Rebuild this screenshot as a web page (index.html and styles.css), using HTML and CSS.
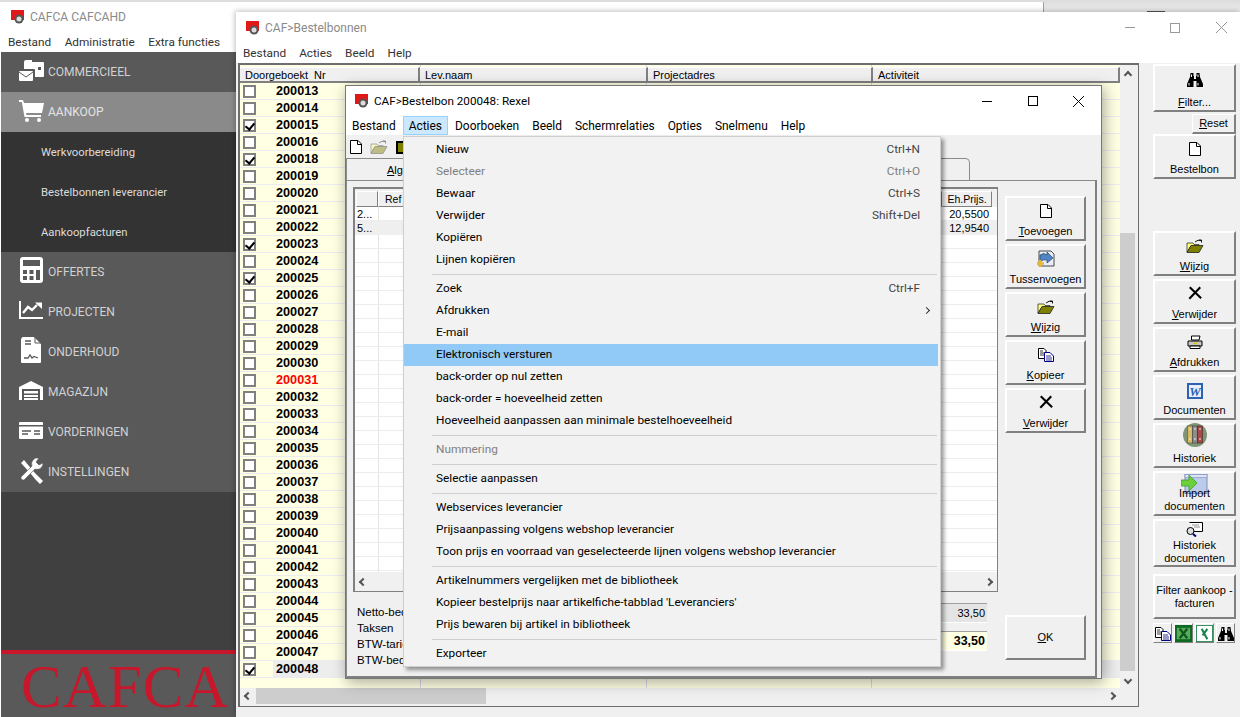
FILE: index.html
```html
<!DOCTYPE html>
<html lang="nl">
<head>
    <meta charset="UTF-8">
    <title>CAFCA CAFCAHD</title>
    <link rel="stylesheet" href="styles.css">
</head>
<body>
<svg class="defs" width="0" height="0">
    <symbol id="i-app" viewBox="0 0 14 14">
        <rect x="0" y="0" width="13" height="10" fill="#e01818"/>
        <circle cx="8" cy="9" r="4.5" fill="#555"/>
        <circle cx="8" cy="9" r="2.5" fill="#ddd"/>
    </symbol>
    <symbol id="i-doc" viewBox="0 0 12 14">
        <path d="M.5.5H8L11.5 4V13.5H.5Z" fill="#fff" stroke="#000"/>
        <path d="M7.5.5V4.5H11.5" fill="none" stroke="#000"/>
    </symbol>
    <symbol id="i-open" viewBox="0 0 18 14">
        <path d="M1 13V4H7L8 5.5H13V7H5L1 13Z" fill="#ffff80" stroke="#333" stroke-width=".8"/>
        <path d="M1 13.5L5 6.5H17L13 13.5Z" fill="#808000" stroke="#222" stroke-width=".8"/>
        <path d="M9 3Q12 .2 15 1.5M15.5 3.5V1H13" fill="none" stroke="#000" stroke-width=".9"/>
    </symbol>
    <symbol id="i-x" viewBox="0 0 16 16">
        <path d="M2 1.5L15 14M14 1.5L1.500 14.500" fill="none" stroke="#000" stroke-width="2.400"/>
    </symbol>
    <symbol id="i-copy" viewBox="0 0 16 14">
        <path d="M.5.5H6L8 2.500V10.500H.5Z" fill="#fff" stroke="#000"/>
        <path d="M2 3H5M2 5H6M2 7H6" stroke="#000" stroke-width=".8"/>
        <path d="M6.500 4.500H12L15.500 8V13.500H6.500Z" fill="#fff" stroke="#000080"/>
        <path d="M8 8H13M8 10H14M8 12H14" stroke="#000080" stroke-width=".8"/>
    </symbol>
    <symbol id="i-print" viewBox="0 0 16 14">
        <path d="M4.500 5V1H13L12 5Z" fill="#fff" stroke="#000"/>
        <path d="M1 6H15V11H1Z" fill="#c8c8c8" stroke="#000"/>
        <path d="M3 11H13V13.500H3Z" fill="#fff" stroke="#000"/>
        <path d="M6 8.500H10" stroke="#e0c000" stroke-width="1.500"/>
    </symbol>
    <symbol id="i-word" viewBox="0 0 16 16">
        <rect width="16" height="16" fill="#2c62b4"/>
        <rect x="2" y="2" width="12" height="12" fill="#e8eefa"/>
        <text x="8" y="13" class="word-letter">W</text>
    </symbol>
    <symbol id="i-binders" viewBox="0 0 24 24">
        <circle cx="12" cy="12" r="12" fill="#7f9676"/>
        <rect x="4.500" y="3" width="5" height="17" fill="#d8b860" stroke="#554" stroke-width=".6"/>
        <rect x="9.500" y="3" width="5" height="17" fill="#8c8c8c" stroke="#444" stroke-width=".6"/>
        <rect x="14.500" y="3" width="5" height="17" fill="#a84848" stroke="#422" stroke-width=".6"/>
        <path d="M6 6H8M11 6H13M16 6H18M6 16H8M11 16H13M16 16H18" stroke="#eee" stroke-width="1.200"/>
    </symbol>
    <symbol id="i-import" viewBox="0 0 27 20">
        <rect x="4" y=".5" width="22" height="19" fill="#bccbea" stroke="#7f90c0"/>
        <rect x="4" y=".5" width="22" height="3" fill="#dde4f5" stroke="#7f90c0" stroke-width=".6"/>
        <path d="M0 6H8V1L16 9L8 17V12H0Z" fill="#6ccf3c" stroke="#3f9c22" stroke-width=".8"/>
    </symbol>
    <symbol id="i-hist" viewBox="0 0 17 15">
        <path d="M3.500.5H16.500V9.500H7.500" fill="#fff" stroke="#000"/>
        <path d="M6 3H13M8 5H14" stroke="#777" stroke-width=".8"/>
        <circle cx="4.500" cy="9" r="3.500" fill="#ddd" stroke="#000"/>
        <path d="M7 12L10 14.500" stroke="#000080" stroke-width="2"/>
    </symbol>
    <symbol id="i-xl1" viewBox="0 0 18 18">
        <rect width="18" height="18" fill="#0b6b20"/>
        <rect x="2" y="3" width="14" height="12" fill="#5ea85e"/>
        <path d="M5 4L13 14M13 4L5 14" stroke="#0b5a1c" stroke-width="2.400"/>
    </symbol>
    <symbol id="i-xl2" viewBox="0 0 18 18">
        <rect x=".5" y=".5" width="17" height="17" fill="#fff" stroke="#2e8a56"/>
        <path d="M6 4L12 15M12 4L7 11" stroke="#17864a" stroke-width="2.200" fill="none"/>
    </symbol>
    <symbol id="i-bino" viewBox="0 0 16 14">
        <path d="M3.500 0H6.500V3H7V6H9V3H9.500V0H12.500L13 4L16 11V14H9.500V8H6.500V14H0V11L3 4Z" fill="#000"/>
        <path d="M4.500 1.500V4M11 1.500V4M2 10V12.500M11 10V12.500" stroke="#fff"/>
    </symbol>
    <symbol id="i-insert" viewBox="0 0 18 18">
        <path d="M2 1H14L17 4V16H2Z" fill="#e8eef8" stroke="#222" stroke-width=".8"/>
        <path d="M3 5Q7 2 10 5V2L16 8L10 13V10Q6 9 3 12Z" fill="#4f86c8" stroke="#234" stroke-width=".6"/>
        <path d="M3 10V17M0 13.500H7" stroke="#e8b830" stroke-width="2.600"/>
    </symbol>
    <symbol id="s-comm" viewBox="0 0 25 21">
        <path d="M7 0H13V2H24Q25 2 25 3V16Q25 17 24 17H16V10Q16 9 15 9H5V2Q5 0 7 0Z" fill="#fff"/>
        <rect x="19" y="7" width="3" height="3" fill="#595959"/>
        <rect x="0" y="11" width="14" height="10" rx="1" fill="#fff"/>
        <path d="M0 12L7 17L14 12" fill="none" stroke="#595959"/>
    </symbol>
    <symbol id="s-cart" viewBox="0 0 25 22">
        <path d="M0 0H4L5 3H25L23 13H7L7.500 15H22V17H5.500L2.800 2H0Z" fill="#fff"/>
        <circle cx="8" cy="20" r="2" fill="#fff"/>
        <circle cx="20" cy="20" r="2" fill="#fff"/>
    </symbol>
    <symbol id="s-calc" viewBox="0 0 23 26">
        <rect width="23" height="26" rx="3" fill="#fff"/>
        <rect x="3" y="3" width="17" height="6" fill="#595959"/>
        <path d="M3 13H7V17H3ZM9.500 13H13.500V17H9.500ZM16 13H20V23H16ZM3 19H7V23H3ZM9.500 19H13.500V23H9.500Z" fill="#595959"/>
    </symbol>
    <symbol id="s-chart" viewBox="0 0 24 18">
        <path d="M0 0H2V16H24V18H0Z" fill="#fff"/>
        <path d="M4 12L9 6L13 9L18 4" fill="none" stroke="#fff" stroke-width="2.400"/>
        <path d="M16 1.500H23V8Z" fill="#fff"/>
    </symbol>
    <symbol id="s-file" viewBox="0 0 20 26">
        <path d="M2 0H13L20 7V25Q20 26 19 26H1Q0 26 0 25V2Q1 0 2 0Z" fill="#fff"/>
        <path d="M14 0V6H20" fill="none" stroke="#595959"/>
        <path d="M4 4H10M4 7H10" stroke="#595959" stroke-width="1.500"/>
        <path d="M3 21H7L9 18L11 21L13 19.500L17 21" fill="none" stroke="#595959" stroke-width="1.300"/>
    </symbol>
    <symbol id="s-garage" viewBox="0 0 24 19">
        <path d="M0 6L12 0L24 6V19H21V8H3V19H0Z" fill="#fff"/>
        <path d="M5 10H19V12.500H5ZM5 14H19V16H5ZM5 17H19V19H5Z" fill="#fff"/>
    </symbol>
    <symbol id="s-card" viewBox="0 0 24 17">
        <rect width="24" height="17" rx="1" fill="#fff"/>
        <rect y="3" width="24" height="1.500" fill="#595959"/>
        <path d="M3 9H12M15 9H21M3 12H9M15 12H21" stroke="#595959" stroke-width="1.500"/>
    </symbol>
    <symbol id="s-tools" viewBox="0 0 24 26">
        <path d="M1 5L4 2L14 14L19 19L23 23L20 26L15 21L11 16Z" fill="#fff"/>
        <path d="M23 5A6 6 0 0 1 15 11L4 22A2.500 2.500 0 0 1 1 19L12 8A6 6 0 0 1 19 0L16 4L19 7Z" fill="#fff" stroke="#595959" stroke-width=".6"/>
    </symbol>
</svg>

<div class="desktop">

    <div class="peek"></div>

    <!-- hoofdvenster -->
    <div class="window main-window">
        <div class="title-bar">
            <svg class="app-icon"><use href="#i-app"/></svg>
            <span class="title-text">CAFCA CAFCAHD</span>
            <div class="win-buttons">
                <span class="win-max"></span><svg class="win-close" viewBox="0 0 11 11"><path d="M0 0L11 11M11 0L0 11"/></svg>
            </div>
        </div>
        <div class="menu-bar main-menu">
            <span>Bestand</span><span>Administratie</span><span>Extra functies</span>
        </div>
        <div class="sidebar">
            <div class="side-item"><svg class="side-icon comm"><use href="#s-comm"/></svg>COMMERCIEEL</div>
            <div class="side-item active"><svg class="side-icon cart"><use href="#s-cart"/></svg>AANKOOP</div>
            <div class="side-sub">Werkvoorbereiding</div>
            <div class="side-sub">Bestelbonnen leverancier</div>
            <div class="side-sub">Aankoopfacturen</div>
            <div class="side-item"><svg class="side-icon calc"><use href="#s-calc"/></svg>OFFERTES</div>
            <div class="side-item"><svg class="side-icon chart"><use href="#s-chart"/></svg>PROJECTEN</div>
            <div class="side-item"><svg class="side-icon file"><use href="#s-file"/></svg>ONDERHOUD</div>
            <div class="side-item"><svg class="side-icon garage"><use href="#s-garage"/></svg>MAGAZIJN</div>
            <div class="side-item"><svg class="side-icon card"><use href="#s-card"/></svg>VORDERINGEN</div>
            <div class="side-item"><svg class="side-icon tools"><use href="#s-tools"/></svg>INSTELLINGEN</div>
            <div class="side-fill"></div>
            <div class="side-logo">CAFCA</div>
        </div>
    </div>

    <!-- lijst bestelbonnen -->
    <div class="window list-window">
        <div class="title-bar">
            <svg class="app-icon"><use href="#i-app"/></svg>
            <span class="title-text">CAF&gt;Bestelbonnen</span>
            <div class="win-buttons inactive">
                <span class="win-min"></span><span class="win-max"></span><svg class="win-close" viewBox="0 0 11 11"><path d="M0 0L11 11M11 0L0 11"/></svg>
            </div>
        </div>
        <div class="menu-bar list-menu">
            <span>Bestand</span><span>Acties</span><span>Beeld</span><span>Help</span>
        </div>
        <div class="list-body">
            <div class="list-frame">
                <div class="list-main">
                    <div class="list-table">
                        <div class="list-head">
                            <div class="col-a">Doorgeboekt&nbsp; Nr</div>
                            <div class="col-b">Lev.naam</div>
                            <div class="col-c">Projectadres</div>
                            <div class="col-d">Activiteit</div>
                        </div>
                        <div class="list-rows">
                            <div class="row"><i class="chk"></i><b>200013</b></div>
                            <div class="row"><i class="chk"></i><b>200014</b></div>
                            <div class="row"><i class="chk on"></i><b>200015</b></div>
                            <div class="row"><i class="chk"></i><b>200016</b></div>
                            <div class="row"><i class="chk on"></i><b>200018</b></div>
                            <div class="row"><i class="chk"></i><b>200019</b></div>
                            <div class="row"><i class="chk"></i><b>200020</b></div>
                            <div class="row"><i class="chk"></i><b>200021</b></div>
                            <div class="row"><i class="chk"></i><b>200022</b></div>
                            <div class="row"><i class="chk on"></i><b>200023</b></div>
                            <div class="row"><i class="chk"></i><b>200024</b></div>
                            <div class="row"><i class="chk on"></i><b>200025</b></div>
                            <div class="row"><i class="chk"></i><b>200026</b></div>
                            <div class="row"><i class="chk"></i><b>200027</b></div>
                            <div class="row"><i class="chk"></i><b>200028</b></div>
                            <div class="row"><i class="chk"></i><b>200029</b></div>
                            <div class="row"><i class="chk"></i><b>200030</b></div>
                            <div class="row red"><i class="chk"></i><b>200031</b></div>
                            <div class="row"><i class="chk"></i><b>200032</b></div>
                            <div class="row"><i class="chk"></i><b>200033</b></div>
                            <div class="row"><i class="chk"></i><b>200034</b></div>
                            <div class="row"><i class="chk"></i><b>200035</b></div>
                            <div class="row"><i class="chk"></i><b>200036</b></div>
                            <div class="row"><i class="chk"></i><b>200037</b></div>
                            <div class="row"><i class="chk"></i><b>200038</b></div>
                            <div class="row"><i class="chk"></i><b>200039</b></div>
                            <div class="row"><i class="chk"></i><b>200040</b></div>
                            <div class="row"><i class="chk"></i><b>200041</b></div>
                            <div class="row"><i class="chk"></i><b>200042</b></div>
                            <div class="row"><i class="chk"></i><b>200043</b></div>
                            <div class="row"><i class="chk"></i><b>200044</b></div>
                            <div class="row"><i class="chk"></i><b>200045</b></div>
                            <div class="row"><i class="chk"></i><b>200046</b></div>
                            <div class="row"><i class="chk"></i><b>200047</b></div>
                            <div class="row current"><i class="chk on"></i><b>200048</b></div>
                        </div>
                    </div>
                    <div class="vscroll">
                        <span class="arrow"><i class="chev up"></i></span>
                        <span class="vthumb"></span>
                        <span class="arrow"><i class="chev down"></i></span>
                    </div>
                </div>
                <div class="hscroll">
                    <span class="arrow"><i class="chev left"></i></span>
                    <span class="hthumb"></span>
                    <span class="arrow"><i class="chev right"></i></span>
                </div>
            </div>
            <div class="side-panel">
                <div class="btn tall"><svg class="ic-bino"><use href="#i-bino"/></svg><span><u>F</u>ilter...</span></div>
                <div class="btn reset"><span><u>R</u>eset</span></div>
                <div class="btn"><svg class="ic-doc"><use href="#i-doc"/></svg><span>Bestelbon</span></div>
                <div class="panel-gap"></div>
                <div class="btn"><svg class="ic-open"><use href="#i-open"/></svg><span><u>W</u>ijzig</span></div>
                <div class="btn"><svg class="ic-x"><use href="#i-x"/></svg><span><u>V</u>erwijder</span></div>
                <div class="btn"><svg class="ic-print"><use href="#i-print"/></svg><span><u>A</u>fdrukken</span></div>
                <div class="btn"><svg class="ic-word"><use href="#i-word"/></svg><span>Documenten</span></div>
                <div class="btn"><svg class="ic-binders"><use href="#i-binders"/></svg><span>Historiek</span></div>
                <div class="btn"><svg class="ic-import"><use href="#i-import"/></svg><span>Import<br>documenten</span></div>
                <div class="btn hist"><svg class="ic-hist"><use href="#i-hist"/></svg><span>Historiek<br>documenten</span></div>
                <div class="btn filter-btn"><span>Filter aankoop -<br>facturen</span></div>
                <div class="small-btns">
                    <div class="btn"><svg class="ic-copy"><use href="#i-copy"/></svg></div>
                    <div class="btn"><svg class="ic-xl"><use href="#i-xl1"/></svg></div>
                    <div class="btn"><svg class="ic-xl"><use href="#i-xl2"/></svg></div>
                    <div class="btn"><svg class="ic-bino"><use href="#i-bino"/></svg></div>
                </div>
            </div>
        </div>
    </div>

    <!-- detail bestelbon -->
    <div class="window bon-window">
        <div class="title-bar">
            <svg class="app-icon"><use href="#i-app"/></svg>
            <span class="title-text">CAF&gt;Bestelbon 200048: Rexel</span>
            <div class="win-buttons">
                <span class="win-min"></span><span class="win-max"></span><svg class="win-close" viewBox="0 0 11 11"><path d="M0 0L11 11M11 0L0 11"/></svg>
            </div>
        </div>
        <div class="menu-bar bon-menu">
            <span>Bestand</span><span class="open">Acties</span><span>Doorboeken</span><span>Beeld</span><span>Schermrelaties</span><span>Opties</span><span>Snelmenu</span><span>Help</span>
        </div>
        <div class="bon-tools">
            <svg class="ic-doc"><use href="#i-doc"/></svg>
            <svg class="ic-open faded"><use href="#i-open"/></svg>
            <span class="floppy"></span>
        </div>
        <div class="bon-tab"><span><u>A</u>lgemeen</span></div>
        <div class="bon-panel">
            <div class="bon-left">
                <div class="lines">
                    <div class="lines-head">
                        <span class="lh-corner"></span>
                        <span class="lh-ref">Ref</span>
                        <span class="lh-price">Eh.Prijs.</span>
                    </div>
                    <div class="lines-rows">
                        <div class="line"><span class="l-first">2...</span><span class="l-price">20,5500</span></div>
                        <div class="line alt"><span class="l-first">5...</span><span class="l-price">12,9540</span></div>
                    </div>
                    <div class="lines-scroll">
                        <span class="arrow"><i class="chev left"></i></span>
                        <span class="arrow"><i class="chev right"></i></span>
                    </div>
                </div>
                <div class="totals">
                    <div class="total-labels">
                        <div>Netto-bedrag</div>
                        <div>Taksen</div>
                        <div>BTW-tarief</div>
                        <div>BTW-bedrag</div>
                    </div>
                    <div class="total-fields">
                        <div class="value plain">33,50</div>
                        <div class="value strong">33,50</div>
                        <div class="bottom-field"></div>
                    </div>
                </div>
            </div>
            <div class="bon-buttons">
                <div class="btn"><svg class="ic-doc"><use href="#i-doc"/></svg><span><u>T</u>oevoegen</span></div>
                <div class="btn"><svg class="ic-insert"><use href="#i-insert"/></svg><span>Tussenvoegen</span></div>
                <div class="btn"><svg class="ic-open"><use href="#i-open"/></svg><span><u>W</u>ijzig</span></div>
                <div class="btn"><svg class="ic-copy"><use href="#i-copy"/></svg><span><u>K</u>opieer</span></div>
                <div class="btn"><svg class="ic-x"><use href="#i-x"/></svg><span><u>V</u>erwijder</span></div>
                <div class="btn ok-btn"><span><u>O</u>K</span></div>
            </div>
        </div>
    </div>

    <!-- uitgeklapt menu Acties -->
    <div class="popup">
        <div class="mi"><span>Nieuw</span><em>Ctrl+N</em></div>
        <div class="mi off"><span>Selecteer</span><em>Ctrl+O</em></div>
        <div class="mi"><span>Bewaar</span><em>Ctrl+S</em></div>
        <div class="mi"><span>Verwijder</span><em>Shift+Del</em></div>
        <div class="mi"><span>Kopiëren</span></div>
        <div class="mi"><span>Lijnen kopiëren</span></div>
        <div class="sep"></div>
        <div class="mi"><span>Zoek</span><em>Ctrl+F</em></div>
        <div class="mi sub"><span>Afdrukken</span></div>
        <div class="mi"><span>E-mail</span></div>
        <div class="mi hover"><span>Elektronisch versturen</span></div>
        <div class="mi"><span>back-order op nul zetten</span></div>
        <div class="mi"><span>back-order = hoeveelheid zetten</span></div>
        <div class="mi"><span>Hoeveelheid aanpassen aan minimale bestelhoeveelheid</span></div>
        <div class="sep"></div>
        <div class="mi off"><span>Nummering</span></div>
        <div class="sep"></div>
        <div class="mi"><span>Selectie aanpassen</span></div>
        <div class="sep"></div>
        <div class="mi"><span>Webservices leverancier</span></div>
        <div class="mi"><span>Prijsaanpassing volgens webshop leverancier</span></div>
        <div class="mi"><span>Toon prijs en voorraad van geselecteerde lijnen volgens webshop leverancier</span></div>
        <div class="sep"></div>
        <div class="mi"><span>Artikelnummers vergelijken met de bibliotheek</span></div>
        <div class="mi"><span>Kopieer bestelprijs naar artikelfiche-tabblad 'Leveranciers'</span></div>
        <div class="mi"><span>Prijs bewaren bij artikel in bibliotheek</span></div>
        <div class="sep"></div>
        <div class="mi"><span>Exporteer</span></div>
    </div>

</div>
</body>
</html>
```

FILE: styles.css
```css
* {
    box-sizing: border-box;
}
body {
    margin: 0;
    font-family: Roboto, "Noto Sans", Arial, sans-serif;
    font-size: 11.800px;
    color: #000;
    background-color: #f0f0f0;
}
.defs {
    display: none;
}
.word-letter {
    font-family: "Liberation Serif", serif;
    font-size: 13px;
    font-weight: bold;
    font-style: italic;
    fill: #2c62b4;
    text-anchor: middle;
}
svg {
    display: block;
    flex-shrink: 0;
}
.desktop {
    position: relative;
    width: 1240px;
    height: 717px;
    overflow: hidden;
    background: linear-gradient(#dcdcdc, #eeeeee 12px);
}
.peek {
    position: absolute;
    left: 1147px;
    top: 11px;
    width: 18px;
    height: 1px;
    background-color: #555;
}

/* vensters */
.window {
    position: absolute;
    display: flex;
    flex-direction: column;
    background-color: #f0f0f0;
}
.main-window {
    left: 0;
    top: 2px;
    width: 1044px;
    height: 715px;
    border-right: 1px solid #a0a0a0;
    background-color: #fff;
}
.list-window {
    left: 236px;
    top: 12px;
    width: 1004px;
    height: 705px;
    box-shadow: -1px -1px 5px rgba(0, 0, 0, 0.25);
}
.bon-window {
    left: 345px;
    top: 85px;
    width: 757px;
    height: 594px;
    border: 1px solid #777;
    box-shadow: 2px 3px 14px rgba(0, 0, 0, 0.35);
}

.title-bar {
    display: flex;
    align-items: center;
    flex-shrink: 0;
    background-color: #fff;
}
.main-window .title-bar {
    height: 30px;
    padding-left: 11px;
}
.main-window .title-text {
    font-size: 12.100px;
}
.main-window .win-buttons {
    margin-right: 1px;
}
.main-window .win-max {
    border-color: #777;
}
.main-window .win-close {
    stroke: #777;
}
.list-window .title-bar {
    height: 31px;
    padding-left: 10px;
}
.bon-window .title-bar {
    height: 30px;
    padding-left: 9px;
}
.app-icon {
    width: 14px;
    height: 14px;
    margin-right: 5px;
}
.title-text {
    color: #8a8a8a;
    font-size: 12px;
    line-height: 16px;
}
.bon-window .title-text {
    color: #000;
    font-size: 11.700px;
}
.win-buttons {
    display: flex;
    align-items: center;
    margin-left: auto;
}
.win-min {
    width: 10px;
    height: 1px;
    background-color: #000;
}
.win-max {
    width: 10px;
    height: 10px;
    border: 1px solid #000;
    margin-left: 36px;
}
.win-close {
    width: 11px;
    height: 11px;
    margin-left: 35px;
    margin-right: 17px;
    stroke: #000;
    stroke-width: 1;
    fill: none;
}
.inactive .win-min {
    background-color: #999;
}
.inactive .win-max {
    border-color: #999;
    margin-left: 35px;
}
.inactive .win-close {
    stroke: #999;
    margin-left: 36px;
    margin-right: 13px;
}

.menu-bar {
    display: flex;
    flex-shrink: 0;
    background-color: #fff;
    line-height: 20px;
}
.main-menu {
    height: 20px;
    padding-left: 2px;
    color: #333;
}
.main-menu span {
    padding: 0 6px;
    margin-right: 1.500px;
}
.list-menu {
    height: 20px;
    padding-left: 1px;
    color: #333;
}
.list-menu span {
    padding: 0 6px;
    margin-right: 1px;
}
.bon-menu {
    height: 20px;
    padding-left: 0;
    border-bottom: 1px solid #f0f0f0;
    font-size: 11.950px;
}
.bon-menu span {
    padding: 0 6px;
    margin-right: 1px;
}
.bon-menu .open {
    background-color: #cce8ff;
    border: 1px solid #99d1ff;
    line-height: 18px;
    padding: 0 5px;
}

/* zijbalk */
.sidebar {
    display: flex;
    flex-direction: column;
    flex-grow: 1;
    width: 236px;
    margin-left: 1px;
    background-color: #595959;
    color: #d2d2d2;
    font-size: 12px;
}
.side-item {
    display: flex;
    align-items: center;
    height: 40px;
    padding-left: 47px;
    position: relative;
}
.side-item.active {
    background-color: #8a8a8a;
    color: #e4e4e4;
}
.side-sub {
    display: flex;
    align-items: center;
    height: 40px;
    padding-left: 40px;
    font-size: 11.300px;
    background-color: #333;
    color: #dcdcdc;
}
.side-icon {
    position: absolute;
}
.side-icon.comm { left: 18px; top: 8px; width: 25px; height: 21px; }
.side-icon.cart { left: 18px; top: 8px; width: 25px; height: 22px; }
.side-icon.calc { left: 19px; top: 5px; width: 23px; height: 26px; }
.side-icon.chart { left: 18px; top: 9px; width: 24px; height: 18px; }
.side-icon.file { left: 20px; top: 5px; width: 20px; height: 26px; }
.side-icon.garage { left: 18px; top: 9px; width: 24px; height: 19px; }
.side-icon.card { left: 18px; top: 10px; width: 24px; height: 17px; }
.side-icon.tools { left: 19px; top: 6px; width: 24px; height: 26px; }
.side-fill {
    height: 162px;
    background-color: #404040;
    border-bottom: 4px solid #c8162a;
    flex-shrink: 0;
}
.side-logo {
    padding-left: 20px;
    font-family: "Liberation Serif", serif;
    font-size: 61px;
    line-height: 60px;
    letter-spacing: 1px;
    color: #c8162a;
    margin-top: 3px;
}

/* lijst */
.list-body {
    display: flex;
    flex-grow: 1;
    padding-left: 2px;
}
.list-frame {
    display: flex;
    flex-direction: column;
    width: 901px;
    height: 644px;
    border: 2px solid #6e6e6e;
    border-right-width: 1px;
    border-bottom-width: 1px;
}
.list-main {
    display: flex;
    height: 623px;
}
.list-table {
    width: 880px;
    padding-top: 2px;
    background-color: #ffffe4;
    background-image: linear-gradient(#d8d8e8, #d8d8e8), linear-gradient(#d8d8e8, #d8d8e8), linear-gradient(#d8d8e8, #d8d8e8);
    background-size: 1px 100%;
    background-position: 180px 0, 406px 0, 631px 0;
    background-repeat: no-repeat;
}
.list-head {
    display: flex;
    height: 16px;
    font-family: "Liberation Sans", Arial, sans-serif;
    font-size: 11px;
    line-height: 15px;
    background-color: #f0f0f0;
}
.list-head div {
    padding-left: 5px;
    border-bottom: 2px solid #808080;
    border-right: 2px solid #808080;
    border-top: 1px solid #fff;
}
.col-a { width: 180px; }
.col-b { width: 228px; }
.col-c { width: 225px; }
.col-d { width: 247px; }
.row {
    display: flex;
    align-items: center;
    height: 17px;
    padding-left: 3px;
    border-bottom: 1px solid #ebebf2;
}
.row b {
    flex-grow: 1;
    margin-left: 17px;
    padding-left: 3px;
    font-family: "Liberation Sans", Arial, sans-serif;
    font-size: 12.700px;
    line-height: 16px;
}
.row.red b {
    color: #f00;
}
.row.current b {
    background-color: #ededed;
}
.chk {
    position: relative;
    width: 13px;
    height: 13px;
    border: 2px solid #808080;
    background-color: #fff;
}
.chk.on::after {
    content: "";
    position: absolute;
    left: 2px;
    top: 0;
    width: 4px;
    height: 7px;
    border-right: 2px solid #000;
    border-bottom: 2px solid #000;
    transform: rotate(40deg);
}
.vscroll {
    display: flex;
    flex-direction: column;
    width: 15px;
}
.vscroll .arrow {
    height: 17px;
}
.vscroll .arrow:first-child {
    height: 168px;
    align-items: flex-start;
    padding-top: 7px;
}
.vthumb {
    height: 438px;
    background-color: #cdcdcd;
}
.hscroll {
    display: flex;
    justify-content: space-between;
    width: 880px;
    height: 16px;
}
.hthumb {
    width: 230px;
    margin-right: auto;
    background-color: #cdcdcd;
}
.arrow {
    display: flex;
    align-items: center;
    justify-content: center;
    width: 16px;
    flex-shrink: 0;
}
.chev {
    display: block;
    width: 6px;
    height: 6px;
    border-left: 2px solid #555;
    border-top: 2px solid #555;
}
.chev.up { transform: rotate(45deg); }
.chev.down { transform: rotate(225deg); }
.chev.left { transform: rotate(-45deg); }
.chev.right { transform: rotate(135deg); }

/* knoppen */
.btn {
    display: flex;
    flex-direction: column;
    align-items: center;
    justify-content: space-between;
    flex-shrink: 0;
    height: 45px;
    padding: 6px 0 1px;
    background-color: #f0f0f0;
    border: 2px solid;
    border-color: #fff #808080 #808080 #fff;
    font-family: "Liberation Sans", Arial, sans-serif;
    font-size: 11px;
    line-height: 13px;
    text-align: center;
}
.side-panel {
    display: flex;
    flex-direction: column;
    gap: 3px;
    width: 83px;
    margin-left: 14px;
    margin-top: 1px;
}
.btn.tall {
    height: 48px;
    padding-top: 7px;
}
.btn.reset {
    align-self: flex-end;
    width: 44px;
    height: 20px;
    padding: 2px 0 0;
    margin-top: -1px;
    margin-bottom: -3px;
    border-left-width: 1px;
    border-top-width: 1px;
}
.panel-gap {
    height: 46px;
}
.btn.hist {
    height: 48px;
    padding: 1px 0 0;
}
.btn.filter-btn {
    justify-content: center;
    margin-top: 4px;
    padding: 0;
}
.small-btns {
    display: flex;
    gap: 2px;
    margin-top: 1px;
}
.small-btns .btn {
    width: 19px;
    height: 20px;
    padding: 1px 0 0;
    justify-content: center;
    border-width: 1px;
}
.ic-doc { width: 12px; height: 14px; }
.ic-open { width: 18px; height: 14px; }
.ic-x { width: 14px; height: 14px; margin-top: -1px; }
.ic-print { width: 16px; height: 14px; }
.ic-word { width: 16px; height: 16px; }
.ic-binders { width: 24px; height: 24px; margin-top: -8px; }
.ic-import { width: 27px; height: 20px; margin-top: -5px; margin-bottom: -8px; }
.ic-hist { width: 17px; height: 15px; }
.ic-bino { width: 16px; height: 14px; }
.ic-copy { width: 16px; height: 14px; }
.ic-xl { width: 17px; height: 17px; }
.ic-insert { width: 18px; height: 18px; margin-top: -2px; }

/* bestelbon */
.bon-tools {
    display: flex;
    align-items: center;
    height: 22px;
    padding-left: 4px;
    gap: 8px;
    flex-shrink: 0;
}
.faded {
    opacity: 0.45;
}
.floppy {
    width: 13px;
    height: 13px;
    background-color: #808000;
    border: 2px solid #000;
}
.bon-tab {
    width: 624px;
    height: 22px;
    padding-left: 40px;
    border: 1px solid #8a8a8a;
    border-bottom: none;
    border-top-right-radius: 5px;
    font-family: "Liberation Sans", Arial, sans-serif;
    font-size: 11px;
    line-height: 22px;
    flex-shrink: 0;
}
.bon-panel {
    display: flex;
    flex-grow: 1;
    width: 751px;
    border: 1px solid #8a8a8a;
    border-right: 2px solid #808080;
    border-bottom: 2px solid #808080;
    font-family: "Liberation Sans", Arial, sans-serif;
    font-size: 11px;
}
.bon-left {
    display: flex;
    flex-direction: column;
    width: 651px;
    padding: 6px 0 0 6px;
}
.lines {
    display: flex;
    flex-direction: column;
    width: 645px;
    height: 405px;
    border: 2px solid #808080;
    border-right-width: 1px;
    border-bottom-width: 1px;
    background-color: #fff;
}
.lines-head {
    display: flex;
    justify-content: space-between;
    height: 18px;
    padding: 2px 5px 0 1px;
    background-color: #f0f0f0;
    font-size: 10.500px;
    line-height: 14px;
    flex-shrink: 0;
}
.lines-head span {
    border: 1px solid #808080;
    border-top-color: #fff;
    border-left-color: #fff;
}
.lh-corner {
    width: 22px;
}
.lh-ref {
    flex-grow: 1;
    padding-left: 6px;
}
.lh-price {
    width: 50px;
    text-align: center;
}
.lines-rows {
    flex-grow: 1;
    background-color: #fff;
    background-image: repeating-linear-gradient(transparent 0 13px, #ececec 13px 14px), linear-gradient(#e4e4e4, #e4e4e4);
    background-size: 100% 100%, 1px 100%;
    background-position: 0 0, 23px 0;
    background-repeat: no-repeat;
}
.line {
    display: flex;
    justify-content: space-between;
    height: 14px;
    padding: 0 8px 0 2px;
    font-size: 11px;
    line-height: 14px;
}
.line.alt {
    background-color: #efefef;
}
.lines-scroll {
    display: flex;
    justify-content: space-between;
    height: 19px;
    background-color: #f0f0f0;
    flex-shrink: 0;
}
.totals {
    display: flex;
    flex-grow: 1;
}
.total-labels {
    width: 91px;
    padding: 12px 0 0 4px;
    line-height: 16px;
    white-space: nowrap;
    font-size: 11.500px;
}
.total-fields {
    display: flex;
    flex-direction: column;
    flex-grow: 1;
    padding-top: 11px;
    padding-right: 11px;
}
.value {
    align-self: flex-end;
    width: 100px;
    height: 20px;
    padding-right: 2px;
    line-height: 18px;
    text-align: right;
}
.value.plain {
    font-size: 11px;
    background-color: #e4e4e4;
    border-bottom: 1px solid #fff;
    border-top: 1px solid #a0a0a0;
}
.value.strong {
    margin-top: 8px;
    font-size: 12.500px;
    font-weight: bold;
    background-color: #ffffe4;
    border-top: 1px solid #a0a0a0;
    border-bottom: 1px solid #fff;
}
.bottom-field {
    width: 333px;
    height: 5px;
    margin-top: 14px;
    border-top: 2px solid #555;
}
.bon-buttons {
    display: flex;
    flex-direction: column;
    gap: 3px;
    width: 81px;
    padding-top: 15px;
    height: 100%;
    margin-left: 7px;
}
.bon-buttons .btn {
    width: 81px;
}
.btn.ok-btn {
    justify-content: center;
    margin-top: auto;
    margin-bottom: 16px;
    padding: 0;
}

/* menu */
.popup {
    position: absolute;
    left: 403px;
    top: 136px;
    width: 538px;
    height: 531px;
    padding: 2px 2px 2px 0;
    background-color: #f2f2f2;
    border: 1px solid #cfcfcf;
    box-shadow: 3px 3px 4px rgba(0, 0, 0, 0.4);
}
.mi {
    display: flex;
    justify-content: space-between;
    height: 22px;
    padding: 0 18px 0 32px;
    line-height: 20px;
}
.mi em {
    font-style: normal;
    color: #444;
}
.mi.off,
.mi.off em {
    color: #808080;
}
.mi.hover {
    background-color: #91c9f7;
}
.mi.sub::after {
    content: "";
    width: 4px;
    height: 4px;
    margin: 8px -9px 0 0;
    border-top: 1px solid #333;
    border-right: 1px solid #333;
    transform: rotate(45deg);
}
.sep {
    height: 1px;
    margin: 3px 1px 3px 28px;
    background-color: #cfcfcf;
}
```
